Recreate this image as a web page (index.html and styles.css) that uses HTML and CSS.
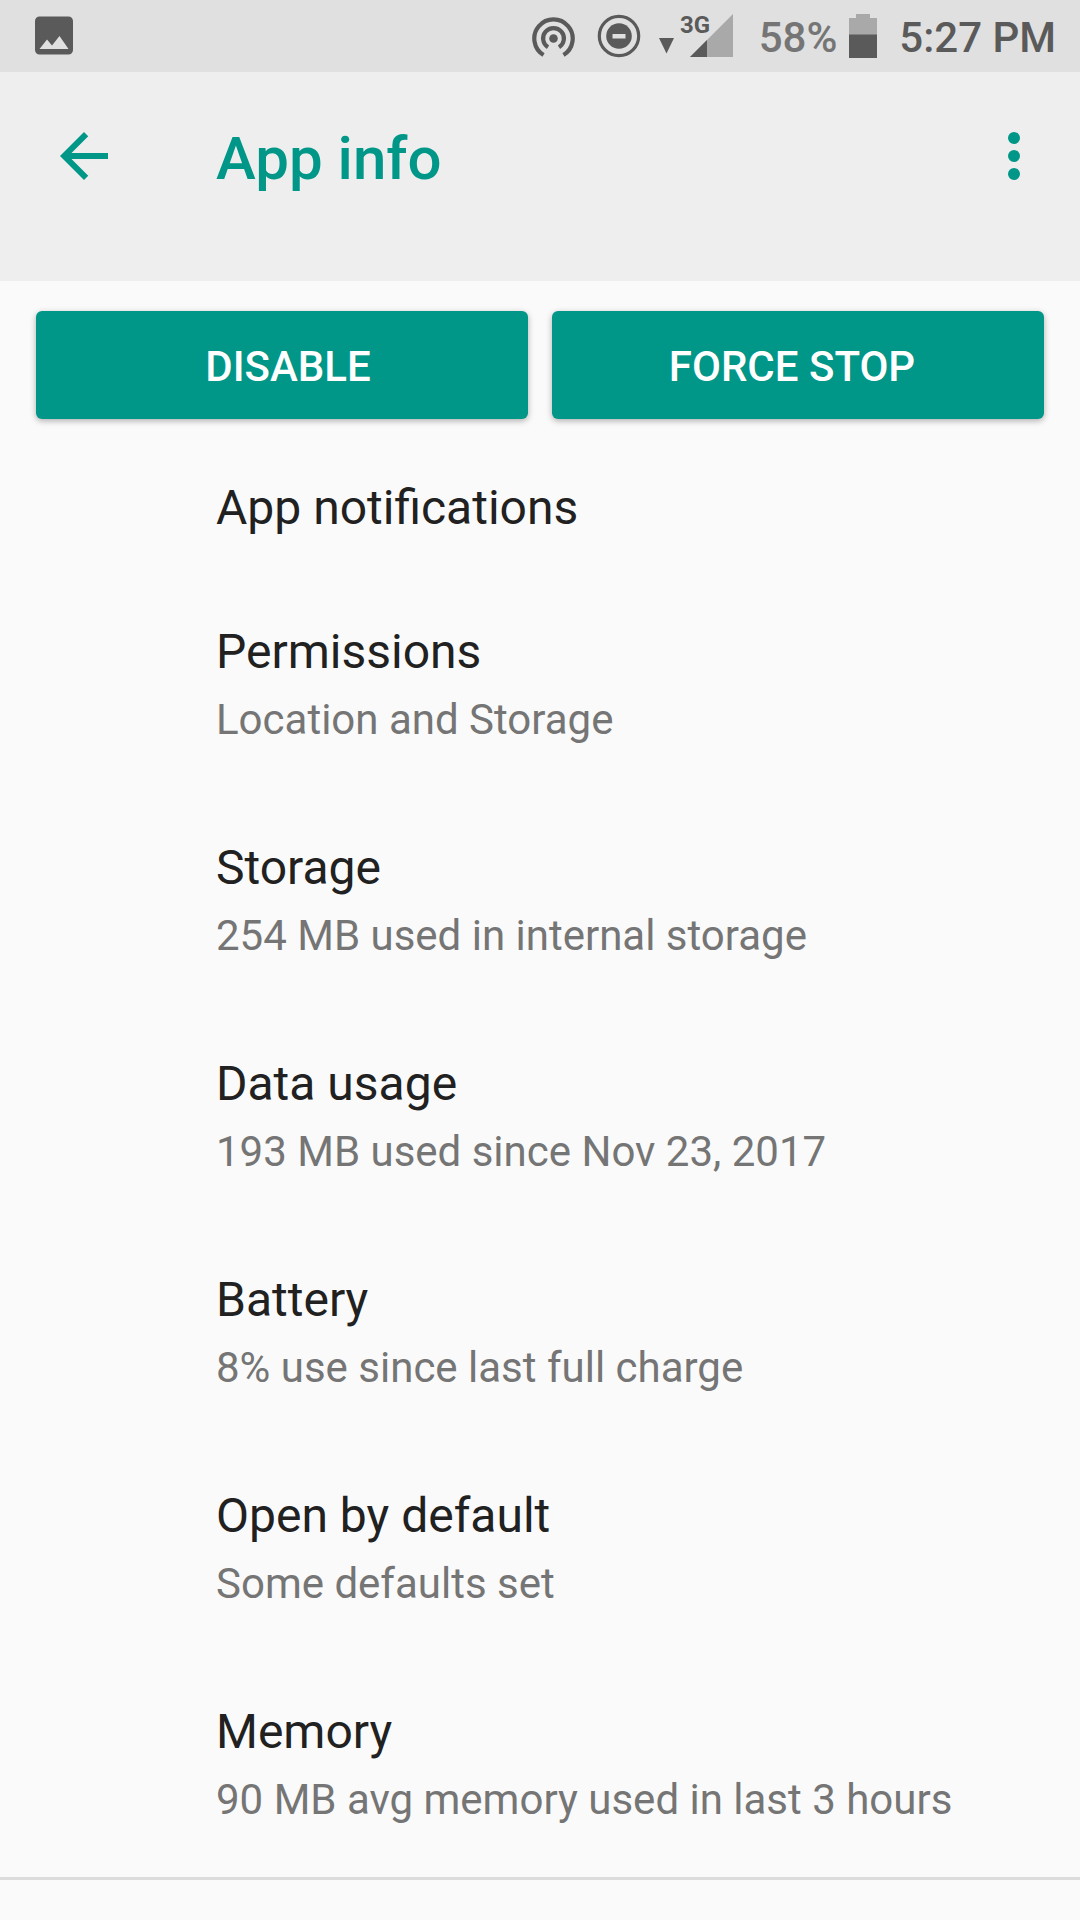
FILE: index.html
```html
<!DOCTYPE html>
<html lang="en">
<head>
  <meta charset="utf-8">
  <meta name="viewport" content="width=device-width, initial-scale=1">
  <title>App info</title>
  <link rel="stylesheet" href="styles.css">
</head>
<body>
  <div class="status-bar">
    <svg class="status-icon" width="40" height="40" viewBox="0 0 40 40" role="img" aria-label="Screenshot saved">
      <path fill="#5a5a5a" fill-rule="evenodd" d="M4.500 .5h29a4.500 4.500 0 0 1 4.500 4.500v29a4.500 4.500 0 0 1-4.500 4.500h-29A4.500 4.500 0 0 1 0 34V5A4.500 4.500 0 0 1 4.500 .5zM4.500 33h29L24.500 20l-7.500 9.500L12 23.500z"/>
    </svg>
    <div class="status-tray">
      <svg class="icon-hotspot" width="44" height="44" viewBox="0 0 44 44" role="img" aria-label="Hotspot">
        <circle cx="21.500" cy="24.500" r="4.300" fill="#5a5a5a"/>
        <g fill="none" stroke="#5a5a5a" stroke-width="4.200">
          <path d="M16 33.300A10.400 10.400 0 1 1 27 33.300"/>
          <path d="M11.500 41A19.200 19.200 0 1 1 31.500 41"/>
        </g>
      </svg>
      <svg class="icon-dnd" width="44" height="44" viewBox="0 0 44 44" role="img" aria-label="Do not disturb">
        <circle cx="22" cy="22" r="19.700" fill="none" stroke="#5a5a5a" stroke-width="3.200"/>
        <circle cx="22" cy="22" r="12.800" fill="#5a5a5a"/>
        <path fill="#e0e0e0" d="M15.500 20h13v4.500h-13z"/>
      </svg>
      <svg class="icon-signal" width="75" height="72" viewBox="0 -14 75 72" role="img" aria-label="3G signal">
        <path fill="#5a5a5a" d="M0 24h15L7.500 39.500z"/>
        <path fill="#a9a9a9" d="M74 0v43H31z"/>
        <path fill="#5a5a5a" d="M48 26v17H31z"/>
        <text class="network-label" x="21" y="19">3G</text>
      </svg>
      <span class="battery-level">58%</span>
      <svg class="icon-battery" width="28" height="44" viewBox="0 0 28 44" role="img" aria-label="Battery">
        <path fill="#a9a9a9" d="M7 0h14v4h7v17H0V4h7z"/>
        <path fill="#5a5a5a" d="M0 20.500h28V44H0z"/>
      </svg>
      <time class="clock" datetime="17:27">5:27 PM</time>
    </div>
  </div>

  <header class="app-bar">
    <button class="icon-button" type="button" aria-label="Navigate up">
      <svg width="72" height="72" viewBox="0 0 24 24"><path fill="currentColor" d="M20 11H7.830l5.590-5.590L12 4l-8 8 8 8 1.410-1.410L7.830 13H20z"/></svg>
    </button>
    <h1 class="app-bar-title">App info</h1>
    <button class="icon-button" type="button" aria-label="More options">
      <svg width="72" height="72" viewBox="0 0 24 24" fill="currentColor"><circle cx="12" cy="6" r="2"/><circle cx="12" cy="12" r="2"/><circle cx="12" cy="18" r="2"/></svg>
    </button>
  </header>

  <main>
    <div class="actions">
      <button class="action action-start" type="button">DISABLE</button>
      <button class="action action-end" type="button">FORCE STOP</button>
    </div>
    <ul class="settings">
      <li><a class="setting" href="#notifications"><span class="setting-title">App notifications</span></a></li>
      <li><a class="setting" href="#permissions"><span class="setting-title">Permissions</span><span class="setting-summary">Location and Storage</span></a></li>
      <li><a class="setting" href="#storage"><span class="setting-title">Storage</span><span class="setting-summary">254 MB used in internal storage</span></a></li>
      <li><a class="setting" href="#data-usage"><span class="setting-title">Data usage</span><span class="setting-summary">193 MB used since Nov 23, 2017</span></a></li>
      <li><a class="setting" href="#battery"><span class="setting-title">Battery</span><span class="setting-summary">8% use since last full charge</span></a></li>
      <li><a class="setting" href="#defaults"><span class="setting-title">Open by default</span><span class="setting-summary">Some defaults set</span></a></li>
      <li><a class="setting" href="#memory"><span class="setting-title">Memory</span><span class="setting-summary">90 MB avg memory used in last 3 hours</span></a></li>
    </ul>
    <hr class="divider">
  </main>
</body>
</html>
```
FILE: styles.css
```css
* {
  box-sizing: border-box;
}

body {
  margin: 0;
  min-height: 100vh;
  background: #fafafa;
  color: #212121;
  font-family: Roboto, "Liberation Sans", sans-serif;
}

svg {
  display: block;
  flex: none;
}

/* Status bar */
.status-bar {
  display: flex;
  align-items: center;
  justify-content: space-between;
  height: 72px;
  padding: 0 24px 0 35px;
  background: #e0e0e0;
  color: #5a5a5a;
  font-size: 42px;
  font-weight: 500;
  line-height: 60px;
  white-space: nowrap;
}

.status-tray {
  display: flex;
  align-items: center;
}

.icon-dnd {
  margin-left: 21px;
}

.icon-signal {
  margin-left: 18px;
}

.network-label {
  fill: #5a5a5a;
  font-size: 24px;
  font-weight: 700;
}

.battery-level,
.clock {
  padding-top: 4px;
}

.battery-level {
  margin-left: 25px;
  color: #757575;
}

.icon-battery {
  margin-left: 12px;
}

.clock {
  margin-left: 22px;
}

/* App bar */
.app-bar {
  display: flex;
  align-items: flex-start;
  padding: 48px 30px 83px 48px;
  background: #eeeeee;
  color: #009688;
}

.icon-button {
  padding: 0;
  border: 0;
  background: none;
  color: inherit;
}

.app-bar-title {
  flex: 1;
  margin: 0 0 0 96px;
  font-size: 60px;
  font-weight: 500;
  line-height: 78px;
}

/* Action buttons */
.actions {
  display: grid;
  grid-template-columns: 1fr 1fr;
  gap: 24px;
  padding: 30px 36px 17px;
}

.action {
  height: 108px;
  padding: 4px 0 0;
  border: 0;
  border-radius: 6px;
  background: #009688;
  box-shadow: 0 2px 6px rgba(0, 0, 0, 0.3);
  color: #ffffff;
  font: 500 42px/60px Roboto, "Liberation Sans", sans-serif;
}

.action-start {
  padding-left: 12px;
}

.action-end {
  padding-right: 12px;
}

/* Settings list */
.settings {
  margin: 0;
  padding: 0;
  list-style: none;
}

.setting {
  display: block;
  padding: 38px 48px 42px 216px;
  color: inherit;
  text-decoration: none;
}

.setting:has(.setting-title:only-child) {
  padding-bottom: 38px;
}

.setting-title,
.setting-summary {
  display: block;
  line-height: 68px;
}

.setting-title {
  font-size: 48px;
}

.setting-summary {
  color: #757575;
  font-size: 42px;
}

.divider {
  height: 3px;
  margin: 1px 0 0;
  border: 0;
  background: #dcdcdc;
}
```
